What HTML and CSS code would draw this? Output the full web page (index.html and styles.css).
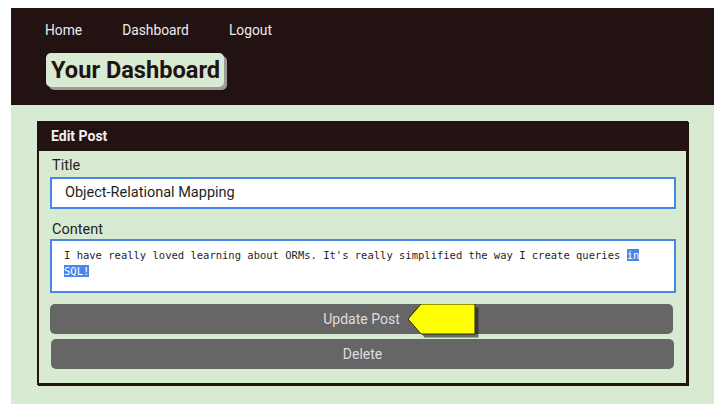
FILE: index.html
```html
<!DOCTYPE html>
<html>
<head>
<meta charset="utf-8">
<link rel="stylesheet" href="styles.css">
</head>
<body>
<header class="top">
  <nav class="nav">
    <a class="nav-link" href="#">Home</a>
    <a class="nav-link" href="#">Dashboard</a>
    <a class="nav-link" href="#">Logout</a>
  </nav>
  <h1 class="badge">Your Dashboard</h1>
</header>
<main class="main">
  <section class="card">
    <div class="card-head">Edit Post</div>
    <form class="card-body">
      <label class="label">Title</label>
      <div class="input">Object-Relational Mapping</div>
      <label class="label label-content">Content</label>
      <div class="textarea">I have really loved learning about ORMs. It's really simplified the way I create queries <span class="sel">in</span><br><span class="sel">SQL!</span></div>
      <div class="btn-wrap">
        <button class="btn" type="button">Update Post</button>
        <svg class="arrow" width="72" height="34" viewBox="0 0 72 34">
          <polygon points="3,15 16,2 70,2 70,32 16,32" fill="#1a1a1a" opacity="0.6" transform="translate(1.5,1.5)"/>
          <polygon points="1,15 14,0 68,0 68,30 14,30" fill="#ffff00" stroke="#2a2a00" stroke-width="1"/>
        </svg>
      </div>
      <button class="btn btn-delete" type="button">Delete</button>
    </form>
  </section>
</main>
</body>
</html>
```
FILE: styles.css
```css
* { box-sizing: border-box; }
body {
  margin: 8px 12px 12px 11px;
  font-family: Roboto, "Noto Sans", sans-serif;
  background: #ffffff;
}
.top {
  background: #231212;
  height: 97px;
  padding: 12px 0 0 34px;
}
.nav {
  display: flex;
  height: 20px;
  align-items: center;
}
.nav-link {
  color: #ececec;
  text-decoration: none;
  font-size: 13.8px;
  margin-right: 40px;
}
.badge {
  display: inline-block;
  margin: 13px 0 0 1px;
  background: #d9ead3;
  color: #231212;
  font-size: 23.6px;
  font-weight: 700;
  line-height: 34px;
  padding: 0 4px 0 5px;
  border-radius: 5px;
  box-shadow: 3px 3px 0 #9a9a9a;
}
.main {
  background: #d9ead3;
  padding: 16px 26px 19px 26px;
}
.card {
  border: 2px solid #231212;
  border-top: 0;
  box-shadow: 1px 1px 0 #231212;
  background: #d9ead3;
}
.card-head {
  background: #231212;
  color: #f0f0f0;
  font-weight: 700;
  font-size: 14px;
  height: 30px;
  line-height: 30px;
  padding-left: 14px;
  margin: 0 -2px 0 -2px;
}
.card-body {
  padding: 6px 10px 14px 11px;
  display: flex;
  flex-direction: column;
}
.label {
  color: #1f1f1f;
  font-size: 14.5px;
  line-height: 17px;
  padding-left: 2px;
}
.label-content { margin-top: 12px; }
.input {
  margin-top: 3px;
  height: 32px;
  border: 2px solid #4a86e8;
  background: #fff;
  font-size: 14.5px;
  color: #1f1f1f;
  line-height: 28px;
  padding-left: 13px;
}
.textarea {
  margin-top: 1px;
  height: 54px;
  border: 2px solid #4a86e8;
  background: #fff;
  font-family: "DejaVu Sans Mono", monospace;
  font-size: 10.5px;
  line-height: 16px;
  color: #1f1f1f;
  padding: 6px 12px;
}
.sel {
  background: #4a86e8;
  color: #fff;
}
.btn-wrap {
  position: relative;
  margin-top: 11px;
  margin-right: 3px;
}
.btn {
  width: 100%;
  height: 30px;
  border: 0;
  border-radius: 5px;
  background: #666666;
  color: #dedede;
  font-family: Roboto, sans-serif;
  font-size: 14px;
  display: block;
}
.btn-delete {
  margin-top: 5px;
  margin-left: 1px;
  width: calc(100% - 3px);
}
.arrow {
  position: absolute;
  left: 357px;
  top: 0;
}
```
